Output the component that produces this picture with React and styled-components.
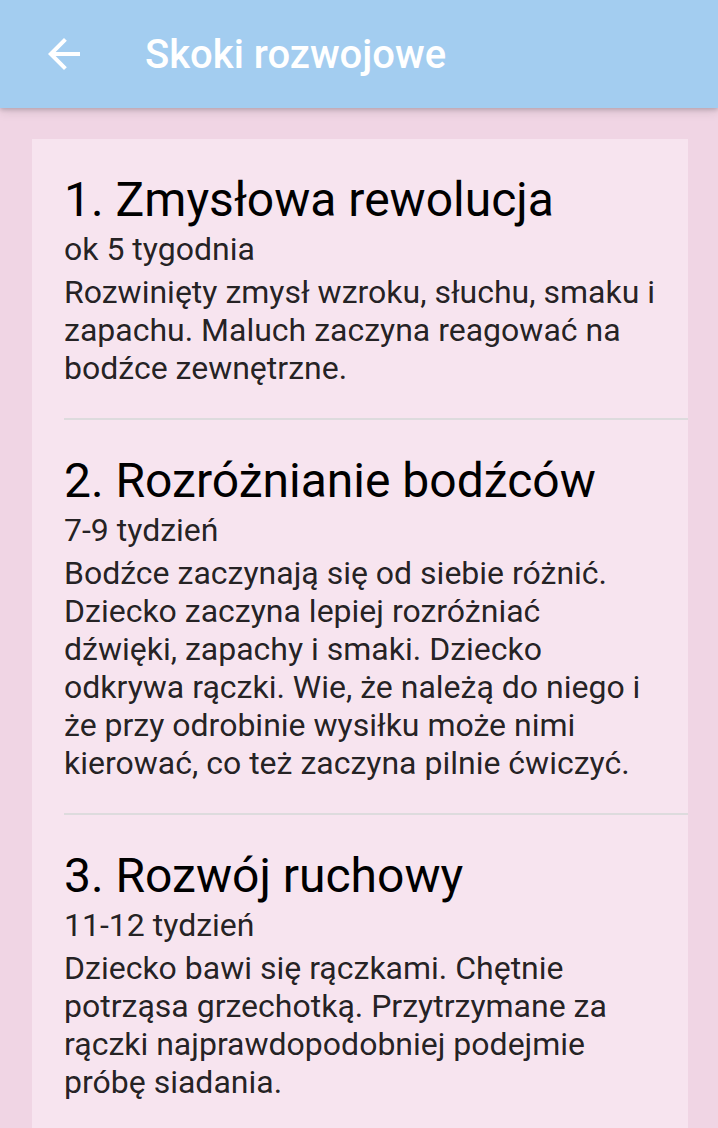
import React from 'react';
import styled, { createGlobalStyle } from 'styled-components';

const GlobalStyle = createGlobalStyle`
  html, body {
    margin: 0;
    padding: 0;
    background: #f0d5e4;
    font-family: Roboto, "Noto Sans", sans-serif;
  }
`;

const Page = styled.div`
  min-height: 1128px;
  background: #f0d5e4;
`;

const AppBar = styled.header`
  position: relative;
  z-index: 1;
  height: 108px;
  display: flex;
  align-items: center;
  background: #a3cdf0;
  box-shadow: 0 2px 4px rgba(0, 0, 0, 0.16), 0 4px 10px rgba(0, 0, 0, 0.1);
`;

const BackButton = styled.button`
  width: 48px;
  height: 48px;
  margin-left: 40px;
  padding: 0;
  border: 0;
  background: transparent;
  display: flex;
  align-items: center;
  justify-content: center;
  color: #fff;
`;

const Title = styled.h1`
  margin: 0 0 0 57px;
  font-size: 40px;
  font-weight: 500;
  color: #fff;
`;

const Content = styled.main`
  padding: 31px 30px 0 32px;
`;

const Card = styled.section`
  background: #f7e4ef;
  min-height: 989px;
`;

const Item = styled.article`
  margin-left: 32px;
  padding: 32px 30px 31px 0;
  border-bottom: ${p => (p.last ? 'none' : '2px solid #dddbdd')};
`;

const ItemTitle = styled.h2`
  margin: 0 0 2px;
  font-size: 48px;
  font-weight: 400;
  line-height: normal;
  color: #000;
`;

const Period = styled.div`
  margin-bottom: 5px;
  font-size: 32px;
  line-height: normal;
  color: rgba(0, 0, 0, 0.87);
`;

const Description = styled.p`
  margin: 0;
  font-size: 32px;
  line-height: normal;
  color: rgba(0, 0, 0, 0.87);
`;

const leaps = [
  {
    title: '1. Zmysłowa rewolucja',
    period: 'ok 5 tygodnia',
    text: 'Rozwinięty zmysł wzroku, słuchu, smaku i zapachu. Maluch zaczyna reagować na bodźce zewnętrzne.',
  },
  {
    title: '2. Rozróżnianie bodźców',
    period: '7-9 tydzień',
    text: 'Bodźce zaczynają się od siebie różnić. Dziecko zaczyna lepiej rozróżniać dźwięki, zapachy i smaki. Dziecko odkrywa rączki. Wie, że należą do niego i że przy odrobinie wysiłku może nimi kierować, co też zaczyna pilnie ćwiczyć.',
  },
  {
    title: '3. Rozwój ruchowy',
    period: '11-12 tydzień',
    text: 'Dziecko bawi się rączkami. Chętnie potrząsa grzechotką. Przytrzymane za rączki najprawdopodobniej podejmie próbę siadania.',
  },
];

const ArrowBack = () => (
  <svg width="48" height="48" viewBox="0 0 24 24" fill="currentColor">
    <path d="M20 11H7.83l5.59-5.59L12 4l-8 8 8 8 1.41-1.41L7.83 13H20v-2z" />
  </svg>
);

export default function App() {
  return (
    <Page>
      <GlobalStyle />
      <AppBar>
        <BackButton aria-label="Wstecz">
          <ArrowBack />
        </BackButton>
        <Title>Skoki rozwojowe</Title>
      </AppBar>
      <Content>
        <Card>
          {leaps.map((leap, i) => (
            <Item key={leap.title} last={i === leaps.length - 1}>
              <ItemTitle>{leap.title}</ItemTitle>
              <Period>{leap.period}</Period>
              <Description>{leap.text}</Description>
            </Item>
          ))}
        </Card>
      </Content>
    </Page>
  );
}
